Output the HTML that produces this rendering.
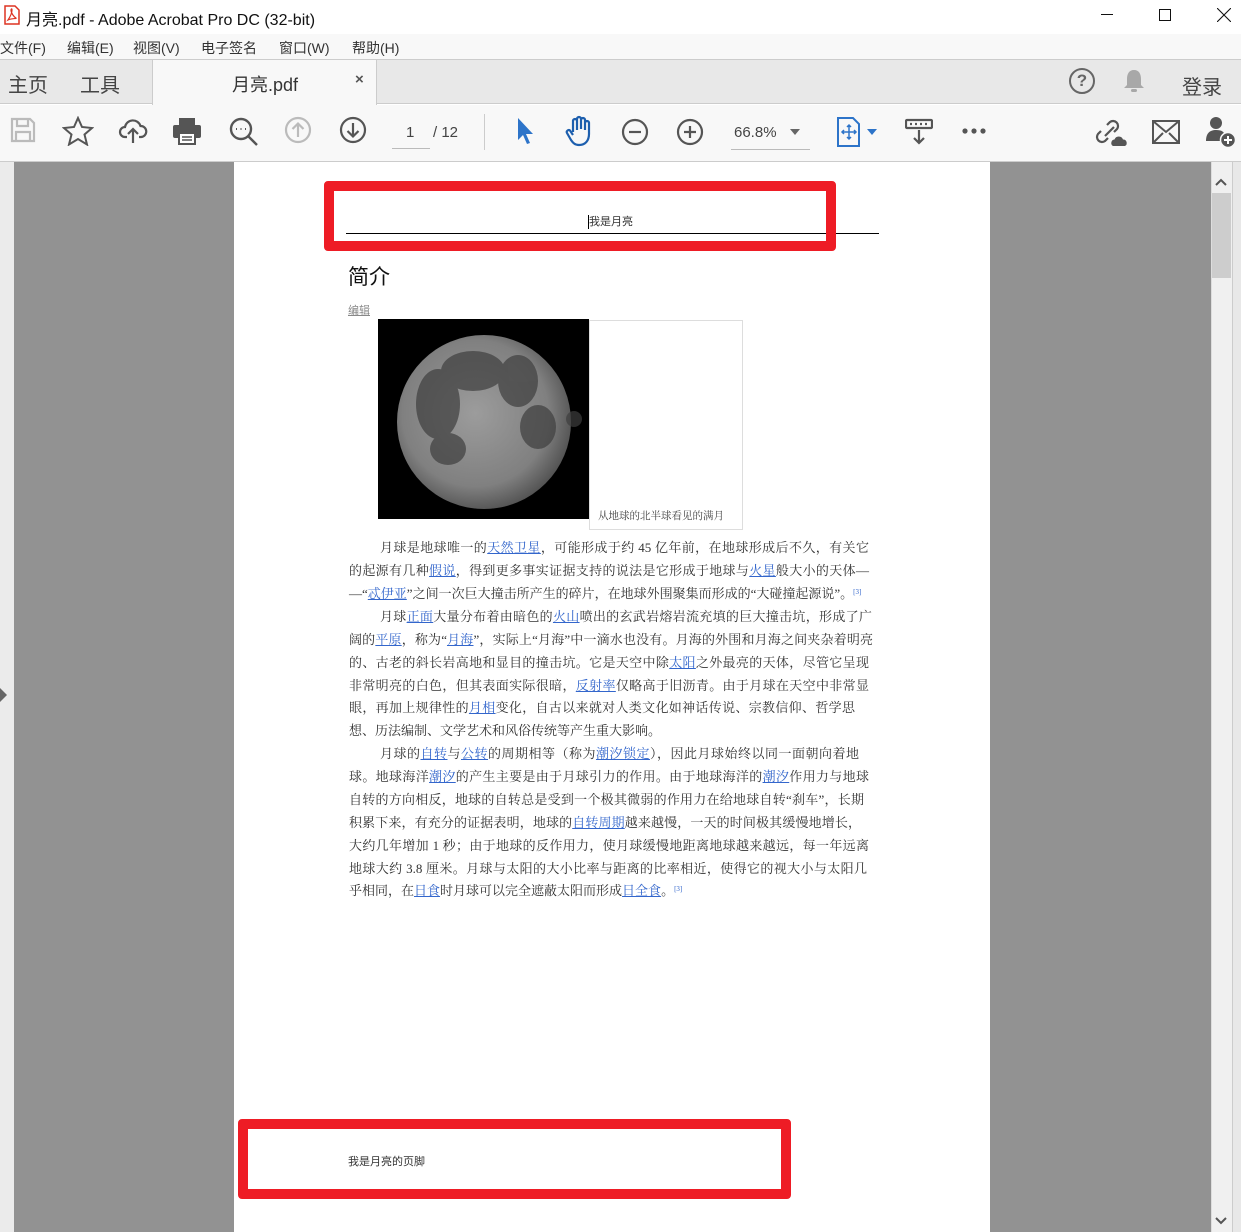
<!DOCTYPE html>
<html><head><meta charset="utf-8"><style>
*{margin:0;padding:0;box-sizing:border-box}
body{width:1241px;height:1232px;overflow:hidden;background:#fff;font-family:"Liberation Sans","Noto Sans CJK SC",sans-serif;position:relative;color:#222}
.abs{position:absolute}
.menu span{position:absolute;top:38px;font-size:14px;color:#333}
.ln{position:absolute;left:349px;width:520px;height:16px;font-family:"Liberation Serif","Noto Serif CJK SC",serif;font-size:13px;line-height:16px;color:#333;text-align:justify;text-align-last:justify;white-space:nowrap}
.ln.last{text-align-last:left}
.ln a{color:#3366cc;text-decoration:underline}
.ln sup{font-size:7px;color:#3366cc;line-height:0;vertical-align:4px}
.ic{position:absolute;top:116px}
</style></head><body>
<svg class="abs" style="left:4px;top:5px" width="16" height="20" viewBox="0 0 16 20"><path d="M1 1h10l4 4v14H1z" fill="#fff" stroke="#d32" stroke-width="1.5"/><path d="M4 15c2-3 4-7 4-10 0-2-1-1-1 0 0 3 3 7 5 8 1 1-4 0-8 2z" fill="none" stroke="#d32" stroke-width="1.2"/></svg>
<div class="abs" style="left:26px;top:6px;font-size:16px;color:#111">月亮.pdf - Adobe Acrobat Pro DC (32-bit)</div>
<div class="abs" style="left:1101px;top:14px;width:12px;height:1px;background:#111"></div>
<div class="abs" style="left:1159px;top:9px;width:12px;height:12px;border:1px solid #111"></div>
<svg class="abs" style="left:1217px;top:8px" width="14" height="14"><path d="M0 0L14 14M14 0L0 14" stroke="#111" stroke-width="1.1"/></svg>
<div class="abs menu" style="left:0;top:34px;width:1241px;height:26px;background:#f8f8f8">
<span style="left:0;top:4px">文件(F)</span><span style="left:67px;top:4px">编辑(E)</span><span style="left:133px;top:4px">视图(V)</span><span style="left:201px;top:4px">电子签名</span><span style="left:279px;top:4px">窗口(W)</span><span style="left:352px;top:4px">帮助(H)</span></div>
<div class="abs" style="left:0;top:59px;width:1241px;height:45px;background:#e8e8e8;border-top:1px solid #ccc;border-bottom:1px solid #ccc"></div>
<div class="abs" style="left:152px;top:59px;width:225px;height:46px;background:#f8f8f8;border-left:1px solid #ccc;border-right:1px solid #ccc;border-top:1px solid #ccc"></div>
<div class="abs" style="left:8px;top:69px;font-size:20px;color:#444">主页</div>
<div class="abs" style="left:80px;top:69px;font-size:20px;color:#444">工具</div>
<div class="abs" style="left:232px;top:71px;font-size:18px;color:#333">月亮.pdf</div>
<div class="abs" style="left:355px;top:71px;font-size:15px;color:#555;font-weight:bold">×</div>
<div class="abs" style="left:1069px;top:68px;width:26px;height:26px;border:2px solid #666;border-radius:50%;text-align:center;font-size:17px;line-height:22px;color:#666;font-weight:bold">?</div>
<svg class="abs" style="left:1122px;top:68px" width="24" height="26"><path d="M12 2c-5 0-7 4-7 9v6l-3 3h20l-3-3v-6c0-5-2-9-7-9z" fill="#a8a8a8"/><rect x="9" y="21" width="6" height="3" rx="1.5" fill="#a8a8a8"/></svg>
<div class="abs" style="left:1182px;top:71px;font-size:20px;color:#444">登录</div>
<div class="abs" style="left:0;top:105px;width:1241px;height:57px;background:#f8f8f8;border-bottom:1px solid #ccc"></div>
<svg class="ic" style="left:9px" width="28" height="28" viewBox="0 0 28 28" fill="none" stroke="#bbb" stroke-width="2.2"><path d="M3 3h18l4 4v18H3z"/><path d="M8 3v7h11V3M7 25v-9h14v9"/></svg>
<svg class="ic" style="left:62px" width="32" height="30" viewBox="0 0 32 30" fill="none" stroke="#555" stroke-width="2"><path d="M16 2l4 9 10 1-7.5 6.5 2.5 10-9-5.5-9 5.5 2.5-10L2 12l10-1z"/></svg>
<svg class="ic" style="left:118px" width="30" height="30" viewBox="0 0 30 30" fill="none" stroke="#555" stroke-width="2.2"><path d="M9 21H7a5 5 0 010-10 8 8 0 0115.5-1A5.5 5.5 0 0123 21h-2"/><path d="M15 27V13M10 18l5-5 5 5"/></svg>
<svg class="ic" style="left:172px" width="30" height="30" viewBox="0 0 30 30"><rect x="7" y="2" width="16" height="7" fill="#555"/><rect x="1" y="9" width="28" height="13" rx="2" fill="#555"/><rect x="7" y="17" width="16" height="11" fill="#fff" stroke="#555" stroke-width="2"/><path d="M10 21h10M10 24h10" stroke="#555" stroke-width="1.5"/></svg>
<svg class="ic" style="left:228px" width="32" height="32" viewBox="0 0 32 32" fill="none" stroke="#555" stroke-width="2.4"><circle cx="13" cy="13" r="10"/><path d="M20 20l9 9"/><path d="M8 13h1M12.5 13h1M17 13h1" stroke-width="2"/></svg>
<svg class="ic" style="left:284px" width="28" height="28" viewBox="0 0 28 28" fill="none" stroke="#bbb" stroke-width="2.2"><circle cx="14" cy="14" r="12"/><path d="M14 21V8M8.5 13l5.5-5.5 5.5 5.5"/></svg>
<svg class="ic" style="left:339px" width="28" height="28" viewBox="0 0 28 28" fill="none" stroke="#555" stroke-width="2.2"><circle cx="14" cy="14" r="12"/><path d="M14 7v13M8.5 15l5.5 5.5 5.5-5.5"/></svg>
<div class="abs" style="left:406px;top:124px;font-size:15px;color:#444">1</div>
<div class="abs" style="left:392px;top:148px;width:38px;height:1px;background:#bbb"></div>
<div class="abs" style="left:433px;top:124px;font-size:15px;color:#444">/ 12</div>
<div class="abs" style="left:484px;top:114px;width:1px;height:36px;background:#ccc"></div>
<svg class="ic" style="left:515px" width="22" height="30" viewBox="0 0 22 30"><path d="M3 2v22l5-5 4 9 3-1-4-9h7z" fill="#2d74c9"/></svg>
<svg class="ic" style="left:565px;top:115px" width="30" height="32" viewBox="0 0 30 32" fill="none" stroke="#1d5fae" stroke-width="2.2" stroke-linejoin="round"><path d="M8 17V6a2 2 0 014 0v9M12 14V4a2 2 0 014 0v10M16 14V5a2 2 0 014 0v10M20 15V8a2 2 0 014 0v11c0 7-4 11-10 11-4 0-6-2-8-5l-4-7a2 2 0 013-2.5L8 20"/></svg>
<svg class="ic" style="left:621px;top:118px" width="28" height="28" viewBox="0 0 28 28" fill="none" stroke="#555" stroke-width="2.2"><circle cx="14" cy="14" r="12"/><path d="M8 14h12"/></svg>
<svg class="ic" style="left:676px;top:118px" width="28" height="28" viewBox="0 0 28 28" fill="none" stroke="#555" stroke-width="2.2"><circle cx="14" cy="14" r="12"/><path d="M8 14h12M14 8v12"/></svg>
<div class="abs" style="left:734px;top:124px;font-size:15px;color:#444">66.8%</div>
<svg class="abs" style="left:790px;top:129px" width="10" height="6"><path d="M0 0h10L5 6z" fill="#666"/></svg>
<div class="abs" style="left:731px;top:149px;width:79px;height:1px;background:#bbb"></div>
<svg class="ic" style="left:837px;top:117px" width="24" height="30" viewBox="0 0 24 30" fill="none" stroke="#2d74c9" stroke-width="2"><path d="M1 1h15l6 6v22H1z"/><path d="M12 8v14M5 15h14M10 10l2-2 2 2M10 20l2 2 2-2M7 13l-2 2 2 2M17 13l2 2-2 2" stroke-width="1.5"/></svg>
<svg class="abs" style="left:867px;top:129px" width="10" height="6"><path d="M0 0h10L5 6z" fill="#2d74c9"/></svg>
<svg class="ic" style="left:905px;top:118px" width="28" height="28" viewBox="0 0 28 28" fill="none" stroke="#555" stroke-width="2.2"><rect x="1" y="2" width="26" height="8" rx="1"/><path d="M5 6h2M10 6h2M15 6h2M20 6h2M14 12v13M9 20l5 5 5-5"/></svg>
<svg class="abs" style="left:962px;top:128px" width="26" height="6"><circle cx="3" cy="3" r="2.6" fill="#555"/><circle cx="12" cy="3" r="2.6" fill="#555"/><circle cx="21" cy="3" r="2.6" fill="#555"/></svg>
<svg class="ic" style="left:1094px;top:116px" width="34" height="32" viewBox="0 0 34 32" fill="none" stroke="#555" stroke-width="2.2"><path d="M13 9l3-3a5 5 0 017 7l-3 3M14 22l-3 3a5 5 0 01-7-7l3-3M11 20l9-9"/><path d="M19 30h12a3.5 3.5 0 00-2-6.5 4.5 4.5 0 00-8.5 0A3.5 3.5 0 0019 30z" fill="#555" stroke="none"/></svg>
<svg class="ic" style="left:1152px;top:120px" width="28" height="24" viewBox="0 0 28 24" fill="none" stroke="#555" stroke-width="2"><rect x="1" y="1" width="26" height="22"/><path d="M1 1l13 11L27 1M1 23l10-10M27 23L17 13"/></svg>
<svg class="ic" style="left:1205px;top:115px" width="32" height="34" viewBox="0 0 32 34"><circle cx="11" cy="8" r="6" fill="#555"/><path d="M1 26c0-8 4-11 10-11s8 2 9 5v6z" fill="#555"/><circle cx="23" cy="25" r="7.5" fill="#555" stroke="#f8f8f8" stroke-width="1.5"/><path d="M23 21v8M19 25h8" stroke="#fff" stroke-width="2"/></svg>
<div class="abs" style="left:0;top:162px;width:1211px;height:1070px;background:#929292"></div>
<div class="abs" style="left:0;top:162px;width:14px;height:1070px;background:#ebebeb"></div>
<svg class="abs" style="left:0;top:688px" width="7" height="14"><path d="M0 0l7 7-7 7z" fill="#666"/></svg>
<div class="abs" style="left:1211px;top:162px;width:21px;height:1070px;background:#f0f0f0;border-left:1px solid #ddd"></div>
<div class="abs" style="left:1232px;top:162px;width:9px;height:1070px;background:#e8e8e8;border-left:1px solid #ccc"></div>
<svg class="abs" style="left:1215px;top:178px" width="12" height="8"><path d="M1 7l5-5 5 5" fill="none" stroke="#555" stroke-width="2"/></svg>
<div class="abs" style="left:1212px;top:193px;width:19px;height:85px;background:#cdcdcd"></div>
<svg class="abs" style="left:1215px;top:1217px" width="12" height="8"><path d="M1 1l5 5 5-5" fill="none" stroke="#555" stroke-width="2"/></svg>
<div class="abs" style="left:234px;top:162px;width:756px;height:1070px;background:#fff"></div>
<div class="abs" style="left:346px;top:233px;width:533px;height:1px;background:#000"></div>
<div class="abs" style="left:588px;top:215px;font-size:11px;color:#333;border-left:1px solid #000;line-height:14px">我是月亮</div>
<div class="abs" style="left:324px;top:181px;width:512px;height:70px;border:10px solid #ee1c25;border-radius:4px"></div>
<div class="abs" style="left:348px;top:261px;font-size:21px;color:#111">简介</div>
<div class="abs" style="left:348px;top:302px;font-size:11px;color:#888;text-decoration:underline">编辑</div>
<div class="abs" style="left:378px;top:319px;width:211px;height:200px;background:#000;overflow:hidden">
<svg width="211" height="200"><defs><radialGradient id="g" cx="45%" cy="45%" r="60%"><stop offset="0" stop-color="#9c9c9c"/><stop offset=".7" stop-color="#808080"/><stop offset="1" stop-color="#4a4a4a"/></radialGradient></defs>
<circle cx="106" cy="103" r="87" fill="url(#g)"/>
<g fill="#3e3e3e" opacity=".7"><ellipse cx="95" cy="52" rx="32" ry="20"/><ellipse cx="140" cy="62" rx="20" ry="26"/><ellipse cx="60" cy="85" rx="22" ry="35"/><ellipse cx="160" cy="108" rx="18" ry="22"/><ellipse cx="70" cy="130" rx="18" ry="16"/><circle cx="196" cy="100" r="8"/></g></svg></div>
<div class="abs" style="left:589px;top:320px;width:154px;height:210px;border:1px solid #ddd"></div>
<div class="abs" style="left:598px;top:508px;font-family:'Liberation Serif','Noto Serif CJK SC',serif;font-size:10.5px;color:#444">从地球的北半球看见的满月</div>

<div class="ln" style="top:540px;left:380px;width:489px">月球是地球唯一的<a>天然卫星</a>，可能形成于约 45 亿年前，在地球形成后不久，有关它</div>
<div class="ln" style="top:563px">的起源有几种<a>假说</a>，得到更多事实证据支持的说法是它形成于地球与<a>火星</a>般大小的天体—</div>
<div class="ln last" style="top:586px">—“<a>忒伊亚</a>”之间一次巨大撞击所产生的碎片，在地球外围聚集而形成的“大碰撞起源说”。<sup>[3]</sup></div>
<div class="ln" style="top:609px;left:380px;width:492px">月球<a>正面</a>大量分布着由暗色的<a>火山</a>喷出的玄武岩熔岩流充填的巨大撞击坑，形成了广</div>
<div class="ln" style="top:632px;width:524px">阔的<a>平原</a>，称为“<a>月海</a>”，实际上“月海”中一滴水也没有。月海的外围和月海之间夹杂着明亮</div>
<div class="ln" style="top:655px">的、古老的斜长岩高地和显目的撞击坑。它是天空中除<a>太阳</a>之外最亮的天体，尽管它呈现</div>
<div class="ln" style="top:678px">非常明亮的白色，但其表面实际很暗，<a>反射率</a>仅略高于旧沥青。由于月球在天空中非常显</div>
<div class="ln" style="top:700px;width:506px">眼，再加上规律性的<a>月相</a>变化，自古以来就对人类文化如神话传说、宗教信仰、哲学思</div>
<div class="ln last" style="top:723px">想、历法编制、文学艺术和风俗传统等产生重大影响。</div>
<div class="ln" style="top:746px;left:380px;width:479px">月球的<a>自转</a>与<a>公转</a>的周期相等（称为<a>潮汐锁定</a>），因此月球始终以同一面朝向着地</div>
<div class="ln" style="top:769px">球。地球海洋<a>潮汐</a>的产生主要是由于月球引力的作用。由于地球海洋的<a>潮汐</a>作用力与地球</div>
<div class="ln" style="top:792px;width:515px">自转的方向相反，地球的自转总是受到一个极其微弱的作用力在给地球自转“刹车”，长期</div>
<div class="ln" style="top:815px;width:512px">积累下来，有充分的证据表明，地球的<a>自转周期</a>越来越慢，一天的时间极其缓慢地增长，</div>
<div class="ln" style="top:838px">大约几年增加 1 秒；由于地球的反作用力，使月球缓慢地距离地球越来越远，每一年远离</div>
<div class="ln" style="top:861px;width:518px">地球大约 3.8 厘米。月球与太阳的大小比率与距离的比率相近，使得它的视大小与太阳几</div>
<div class="ln last" style="top:883px">乎相同，在<a>日食</a>时月球可以完全遮蔽太阳而形成<a>日全食</a>。<sup>[3]</sup></div>

<div class="abs" style="left:238px;top:1119px;width:553px;height:80px;border:10px solid #ee1c25;border-radius:4px"></div>
<div class="abs" style="left:348px;top:1153px;font-size:11px;color:#333">我是月亮的页脚</div>
</body></html>
